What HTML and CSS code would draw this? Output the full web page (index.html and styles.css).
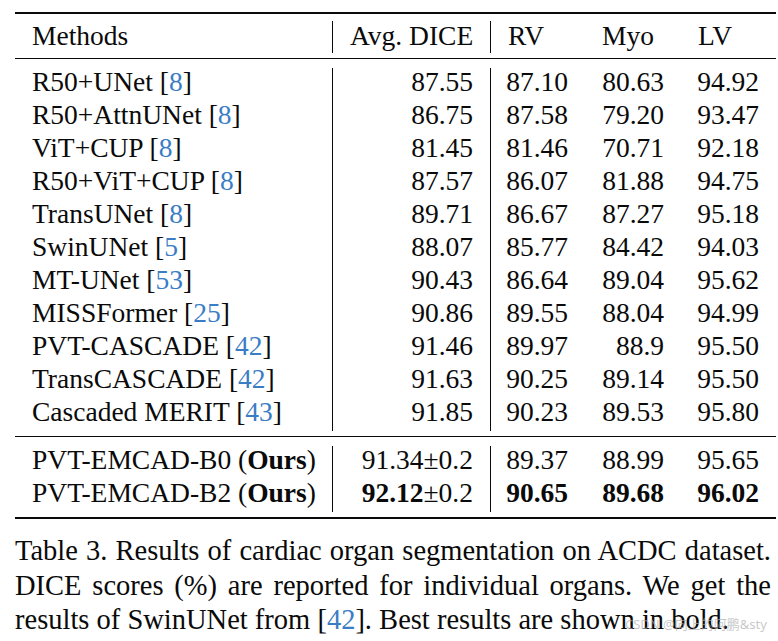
FILE: index.html
```html
<!DOCTYPE html>
<html>
<head>
<meta charset="utf-8">
<link rel="stylesheet" href="styles.css">
</head>
<body>
<div class="page">
  <div class="tbl">
    <div class="rule thick first"></div>
    <div class="grid head">
      <div class="c m">Methods</div>
      <div class="c a hl">Avg. DICE</div>
      <div class="c n hl">RV</div>
      <div class="c n hl">Myo</div>
      <div class="c n hl">LV</div>
    </div>
    <div class="rule thin"></div>
    <div class="grid body">
      <div class="c m">R50+UNet [<span class="ref">8</span>]</div><div class="c a">87.55</div><div class="c n">87.10</div><div class="c n">80.63</div><div class="c n">94.92</div>
      <div class="c m">R50+AttnUNet [<span class="ref">8</span>]</div><div class="c a">86.75</div><div class="c n">87.58</div><div class="c n">79.20</div><div class="c n">93.47</div>
      <div class="c m">ViT+CUP [<span class="ref">8</span>]</div><div class="c a">81.45</div><div class="c n">81.46</div><div class="c n">70.71</div><div class="c n">92.18</div>
      <div class="c m">R50+ViT+CUP [<span class="ref">8</span>]</div><div class="c a">87.57</div><div class="c n">86.07</div><div class="c n">81.88</div><div class="c n">94.75</div>
      <div class="c m">TransUNet [<span class="ref">8</span>]</div><div class="c a">89.71</div><div class="c n">86.67</div><div class="c n">87.27</div><div class="c n">95.18</div>
      <div class="c m">SwinUNet [<span class="ref">5</span>]</div><div class="c a">88.07</div><div class="c n">85.77</div><div class="c n">84.42</div><div class="c n">94.03</div>
      <div class="c m">MT-UNet [<span class="ref">53</span>]</div><div class="c a">90.43</div><div class="c n">86.64</div><div class="c n">89.04</div><div class="c n">95.62</div>
      <div class="c m">MISSFormer [<span class="ref">25</span>]</div><div class="c a">90.86</div><div class="c n">89.55</div><div class="c n">88.04</div><div class="c n">94.99</div>
      <div class="c m">PVT-CASCADE [<span class="ref">42</span>]</div><div class="c a">91.46</div><div class="c n">89.97</div><div class="c n">88.9</div><div class="c n">95.50</div>
      <div class="c m">TransCASCADE [<span class="ref">42</span>]</div><div class="c a">91.63</div><div class="c n">90.25</div><div class="c n">89.14</div><div class="c n">95.50</div>
      <div class="c m">Cascaded MERIT [<span class="ref">43</span>]</div><div class="c a">91.85</div><div class="c n">90.23</div><div class="c n">89.53</div><div class="c n">95.80</div>
    </div>
    <div class="rule thin"></div>
    <div class="grid body">
      <div class="c m">PVT-EMCAD-B0 (<b>Ours</b>)</div><div class="c a">91.34±0.2</div><div class="c n">89.37</div><div class="c n">88.99</div><div class="c n">95.65</div>
      <div class="c m">PVT-EMCAD-B2 (<b>Ours</b>)</div><div class="c a"><b>92.12</b>±0.2</div><div class="c n"><b>90.65</b></div><div class="c n"><b>89.68</b></div><div class="c n"><b>96.02</b></div>
    </div>
    <div class="rule thick last"></div>
  </div>
  <div class="caption">
    <span class="line">Table 3. Results of cardiac organ segmentation on ACDC dataset.</span>
    <span class="line">DICE scores (%) are reported for individual organs. We get the</span>
    <span class="line final">results of SwinUNet from [<span class="ref">42</span>]. Best results are shown in bold.</span>
  </div>
  <div class="watermark">CSDN @向上的阿鹏&amp;sty</div>
</div>
</body>
</html>
```
FILE: styles.css
```css
html, body {
  margin: 0;
  padding: 0;
  background: #ffffff;
}
.page {
  position: relative;
  width: 778px;
  height: 641px;
  padding: 12px 0 0 15px;
  box-sizing: border-box;
  font-family: "Liberation Serif", "Times New Roman", serif;
  color: #0a0a0a;
  overflow: hidden;
}
.tbl {
  width: 761px;
  display: flex;
  flex-direction: column;
}
.rule {
  background: #0a0a0a;
}
.rule.thick { height: 2px; }
.rule.thin { height: 1px; margin: 5px 0 9px; }
.rule.first { margin-bottom: 7px; }
.rule.last { margin-top: 5px; }
.grid {
  display: grid;
  grid-template-columns: 318px 158px 94px 96px 95px;
  font-size: 27.5px;
}
.c {
  line-height: 27px;
  white-space: nowrap;
  box-sizing: border-box;
}
.head .c {
  padding-top: 1px;
  height: 32px;
}
.body .c {
  padding-top: 0;
  height: 33px;
}
.c.m {
  padding-left: 17px;
  border-right: 1px solid #0a0a0a;
}
.c.a {
  text-align: right;
  padding-right: 17px;
  border-right: 1px solid #0a0a0a;
}
.c.n {
  text-align: right;
  padding-right: 17px;
}
.head .c.hl {
  text-align: left;
  padding-left: 17px;
}
.head .c.a {
  text-align: right;
}
.ref {
  color: #3a7dc5;
}
b {
  font-weight: bold;
}
.caption {
  width: 756px;
  margin-top: 15px;
  font-size: 28.5px;
  line-height: 34.5px;
}
.caption .line {
  display: block;
  text-align: justify;
  text-align-last: justify;
}
.caption .line.final {
  text-align-last: left;
}
.watermark {
  position: absolute;
  left: 625px;
  top: 614px;
  font-family: "Noto Sans", "Noto Sans CJK SC", sans-serif;
  font-size: 13px;
  color: rgba(175, 175, 175, 0.7);
  white-space: nowrap;
}
```
